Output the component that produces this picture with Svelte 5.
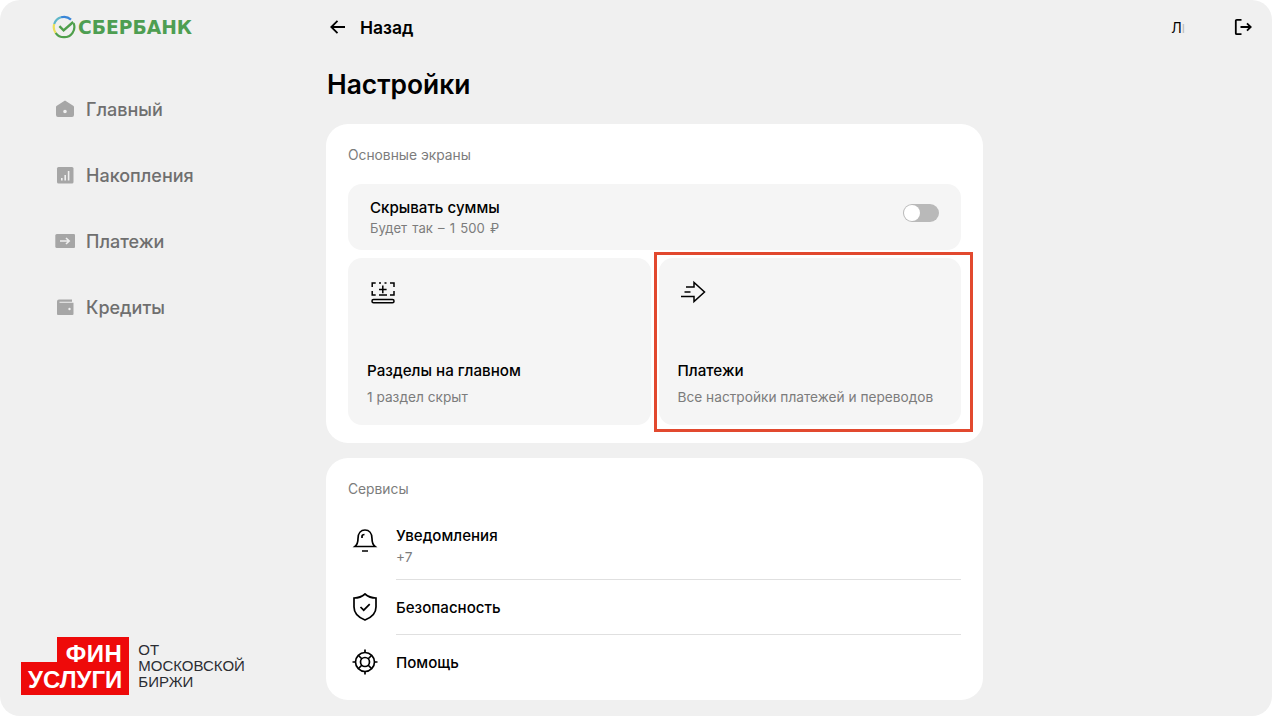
<script>
	const nav = [
		{ label: 'Главный', icon: 'home' },
		{ label: 'Накопления', icon: 'chart' },
		{ label: 'Платежи', icon: 'pay' },
		{ label: 'Кредиты', icon: 'wallet' }
	];
</script>

<div class="page">
	<aside class="sidebar">
		<div class="logo">
			<svg width="24" height="24" viewBox="0 0 24 24" fill="none">
				<path d="M21.6 8.2A10.2 10.2 0 0 1 12 22.2a10.2 10.2 0 0 1-8.4-4.4" stroke="#4f9f4b" stroke-width="2.2" />
				<path d="M3.6 17.8A10.2 10.2 0 0 1 2.2 9" stroke="#e9e05a" stroke-width="2.2" />
				<path d="M2.2 9A10.2 10.2 0 0 1 9 2.3" stroke="#5fb7c9" stroke-width="2.2" />
				<path d="M9 2.3A10.2 10.2 0 0 1 19 4.6" stroke="#3a86d8" stroke-width="2.2" />
				<path d="M7.4 11.2l4.2 4.2 9.6-8.4" stroke="#4f9f4b" stroke-width="2.4" />
			</svg>
			<span>СБЕРБАНК</span>
		</div>

		<nav>
			{#each nav as item}
				<div class="nav-item">
					<span class="nav-icon">
						{#if item.icon === 'home'}
							<svg width="20" height="20" viewBox="0 0 20 20">
								<path fill-rule="evenodd" d="M1 8a1.500 1.500 0 0 1 .8-1.300L10 1.500l8.200 5.200A1.500 1.500 0 0 1 19 8v8a2 2 0 0 1-2 2H3a2 2 0 0 1-2-2Zm9 2.700a1.800 1.800 0 1 0 0 3.600 1.800 1.800 0 0 0 0-3.600Z" fill="#a6a6a6" />
							</svg>
						{:else if item.icon === 'chart'}
							<svg width="20" height="20" viewBox="0 0 20 20">
								<rect x="2" y="2" width="16.500" height="16.500" rx="1.500" fill="#a6a6a6" />
								<rect x="6" y="13" width="1.600" height="2.500" fill="#f0f0f0" />
								<rect x="9.400" y="10" width="1.600" height="5.500" fill="#f0f0f0" />
								<rect x="12.800" y="6" width="1.600" height="9.500" fill="#f0f0f0" />
							</svg>
						{:else if item.icon === 'pay'}
							<svg width="20" height="20" viewBox="0 0 20 20">
								<rect x="0.300" y="3" width="20" height="14" rx="1.500" fill="#a6a6a6" />
								<path d="M5 10h9M11 7l3.200 3-3.200 3" fill="none" stroke="#f0f0f0" stroke-width="1.600" />
							</svg>
						{:else}
							<svg width="20" height="20" viewBox="0 0 20 20">
								<path d="M2 4.500A2 2 0 0 1 4 2.500h13v2.200H4.500v1.100H18.500V17a1 1 0 0 1-1 1H3a1 1 0 0 1-1-1Z" fill="#a6a6a6" />
								<circle cx="14.500" cy="12" r="1.200" fill="#f0f0f0" />
							</svg>
						{/if}
					</span>
					<span>{item.label}</span>
				</div>
			{/each}
		</nav>

		<div class="fin">
			<div class="fin-mark">
				<div class="fin-top">ФИН</div>
				<div class="fin-bottom">УСЛУГИ</div>
			</div>
			<div class="fin-text">ОТ<br />МОСКОВСКОЙ<br />БИРЖИ</div>
		</div>
	</aside>

	<main class="main">
		<div class="back">
			<svg width="20" height="20" viewBox="0 0 20 20" fill="none">
				<path d="M17 10H3.500M9.500 3.800 3.300 10l6.200 6.200" stroke="#000" stroke-width="1.800" />
			</svg>
			<span>Назад</span>
		</div>

		<h1>Настройки</h1>

		<section class="card first">
			<h2>Основные экраны</h2>

			<div class="hide-row">
				<div>
					<div class="row-title">Скрывать суммы</div>
					<div class="row-sub hide-sub">Будет так – 1 500 ₽</div>
				</div>
				<span class="toggle"><span class="knob"></span></span>
			</div>

			<div class="tiles">
				<div class="tile">
					<svg class="tile-icon" width="26" height="26" viewBox="0 0 26 26" fill="none" stroke="#000" stroke-width="1.500">
						<path d="M3.200 8V4h3.500M10 4h2M15.500 4h2M21 4h4v4M3.200 12v4h3.500M10 16h8M21 16h4v-4" />
						<path d="M13.800 6.500v7.800M10 10.400h7.600" />
						<rect x="3" y="20.500" width="22" height="3.200" rx="1.500" />
					</svg>
					<div class="tile-title">Разделы на главном</div>
					<div class="tile-sub">1 раздел скрыт</div>
				</div>
				<div class="tile">
					<svg class="tile-icon" width="26" height="26" viewBox="0 0 26 26" fill="none" stroke="#000" stroke-width="1.500">
						<path d="M6 8h8V3.500L24.500 13 14 22.500v-5H1" />
						<path d="M4.500 13h6" />
					</svg>
					<div class="tile-title">Платежи</div>
					<div class="tile-sub">Все настройки платежей и переводов</div>
					<div class="highlight"></div>
				</div>
			</div>
		</section>

		<section class="card second">
			<h2>Сервисы</h2>

			<div class="service tall">
				<svg class="bell" width="26" height="26" viewBox="0 0 26 26" fill="none" stroke="#000" stroke-width="1.700">
					<path d="M3 19.500c2.500-2 3-4.500 3-8C6 6 9 3 13 3s7 3 7 8.500c0 3.500.5 6 3 8Z" />
					<path d="M10 11V9.500c0-1 1-2 2.500-2M10 24h6" />
				</svg>
				<div class="service-body">
					<div class="row-title">Уведомления</div>
					<div class="row-sub">+7</div>
				</div>
			</div>
			<div class="service">
				<svg width="26" height="28" viewBox="0 0 26 28" fill="none" stroke="#000" stroke-width="1.700">
					<path d="M13 1c3 2.700 6.500 4 11 4v9c0 6-4.500 10.500-11 13C6.500 24.500 2 20 2 14V5c4.500 0 8-1.300 11-4Z" />
					<path d="M8.500 14l3.200 3.200 6-6" />
				</svg>
				<div class="service-body"><div class="row-title">Безопасность</div></div>
			</div>
			<div class="service">
				<svg width="26" height="26" viewBox="0 0 26 26" fill="none" stroke="#000" stroke-width="1.700">
					<circle cx="13" cy="13" r="9.500" />
					<circle cx="13" cy="13" r="4.500" />
					<path d="M6.500 6.500l3.500 3.500M19.500 6.500 16 10M6.500 19.500l3.500-3.500M19.500 19.500 16 16M13 .5v3M13 22.500v3M.5 13h3M22.500 13h3" />
				</svg>
				<div class="service-body"><div class="row-title">Помощь</div></div>
			</div>
		</section>
	</main>

	<div class="user">
		<span class="user-name">Л<span class="fade">I</span></span>
		<svg width="20" height="20" viewBox="0 0 20 20" fill="none" stroke="#000" stroke-width="1.800">
			<path d="M8.500 2.800H3.800a1 1 0 0 0-1 1v12.400a1 1 0 0 0 1 1h4.700" />
			<path d="M7.500 10h10M14 6.300 17.700 10 14 13.700" />
		</svg>
	</div>
</div>

<style>
	:global(body) {
		margin: 0;
		background: #fff;
	}

	.page {
		position: relative;
		display: flex;
		width: 1272px;
		height: 716px;
		overflow: hidden;
		background: #f0f0f0;
		border-radius: 20px;
		font-family: Inter, 'Noto Sans', sans-serif;
		color: #000;
	}

	.sidebar {
		display: flex;
		flex-direction: column;
		width: 326px;
		flex-shrink: 0;
		box-sizing: border-box;
		padding-top: 15px;
	}

	.logo {
		display: flex;
		align-items: center;
		gap: 2px;
		height: 24px;
		margin-left: 52px;
		font-family: 'DejaVu Sans', sans-serif;
		font-size: 18.700px;
		font-weight: 700;
		color: #4e9e52;
	}

	nav {
		display: flex;
		flex-direction: column;
		gap: 30px;
		margin-top: 52px;
		margin-left: 55px;
	}

	.nav-item {
		display: flex;
		align-items: center;
		gap: 11px;
		height: 36px;
		font-size: 18px;
		font-weight: 500;
		color: #6f6f6f;
	}

	.nav-icon {
		display: flex;
		width: 20px;
		height: 20px;
	}

	.fin {
		display: flex;
		align-items: center;
		gap: 9px;
		margin-top: auto;
		margin-bottom: 21px;
		margin-left: 21px;
	}

	.fin-mark {
		display: flex;
		flex-direction: column;
		align-items: flex-end;
		font-family: 'Liberation Sans', sans-serif;
		font-weight: 700;
		color: #fff;
		background: linear-gradient(#f0f0f0 0 25px, #ee0a0a 25px);
	}

	.fin-top {
		height: 29px;
		padding: 0 7px 0 9px;
		background: #ee0a0a;
		font-size: 24px;
		line-height: 33px;
		letter-spacing: 0.5px;
	}

	.fin-bottom {
		height: 29px;
		padding: 0 7px;
		font-size: 24px;
		line-height: 27px;
	}

	.fin-text {
		font-family: 'Liberation Sans', sans-serif;
		font-size: 15px;
		line-height: 16px;
		color: #2b2d33;
	}

	.main {
		width: 657px;
		padding-top: 17px;
	}

	.back {
		display: flex;
		align-items: center;
		gap: 12px;
		height: 20px;
		margin-left: 2px;
		font-size: 17.500px;
		font-weight: 600;
	}

	h1 {
		margin: 30px 0 23px 1px;
		font-size: 26.400px;
		line-height: 34px;
		font-weight: 600;
	}

	.card {
		box-sizing: border-box;
		background: #fff;
		border-radius: 22px;
		padding: 22px;
	}

	.first {
		height: 319px;
		margin-bottom: 15px;
	}

	.second {
		height: 242px;
	}

	h2 {
		margin: 0;
		font-size: 13.800px;
		line-height: 18px;
		font-weight: 400;
		color: #7c7c7c;
	}

	.hide-row {
		display: flex;
		align-items: center;
		justify-content: space-between;
		box-sizing: border-box;
		height: 66px;
		margin-top: 20px;
		padding: 0 22px;
		background: #f5f5f5;
		border-radius: 14px;
	}

	.row-title {
		font-size: 15.100px;
		line-height: 20px;
		font-weight: 500;
	}

	.row-sub {
		font-size: 13.700px;
		line-height: 18px;
		color: #7c7c7c;
	}

	.hide-sub {
		margin-top: 1px;
		font-size: 13.100px;
		word-spacing: 1.500px;
	}

	.toggle {
		position: relative;
		width: 36px;
		height: 18px;
		margin-bottom: 8px;
		border-radius: 9px;
		background: #b9b9b9;
	}

	.knob {
		position: absolute;
		left: 1px;
		top: 1px;
		box-sizing: border-box;
		width: 16px;
		height: 16px;
		border-radius: 50%;
		background: #fff;
	}

	.tiles {
		display: grid;
		grid-template-columns: 1fr 1fr;
		gap: 8px;
		margin-top: 8px;
	}

	.tile {
		position: relative;
		box-sizing: border-box;
		height: 167px;
		padding: 21px 19px 0;
		background: #f5f5f5;
		border-radius: 14px;
	}

	.tile-icon {
		display: block;
		margin-left: 2px;
	}

	.tile-title {
		margin-top: 56px;
		font-size: 15.200px;
		line-height: 20px;
		font-weight: 500;
	}

	.tile-sub {
		margin-top: 7px;
		font-size: 13.700px;
		line-height: 18px;
		color: #7c7c7c;
	}

	/* annotation frame drawn over the tile */
	.highlight {
		position: absolute;
		left: -5px;
		top: -6px;
		right: -12px;
		bottom: -7px;
		border: 3px solid #e2492f;
	}

	.service {
		display: flex;
		align-items: center;
		gap: 18px;
		height: 55px;
		margin-left: 4px;
	}

	.service.tall {
		height: 68px;
		margin-top: 13px;
	}

	.bell {
		margin-top: -10px;
	}

	.service-body {
		flex: 1;
		display: flex;
		flex-direction: column;
		justify-content: center;
		align-self: stretch;
		box-sizing: border-box;
		padding-top: 2px;
		gap: 2px;
	}

	.service + .service .service-body {
		border-top: 1px solid #e0e0e0;
	}

	.user {
		position: absolute;
		top: 17px;
		right: 19px;
		display: flex;
		align-items: center;
		gap: 48px;
		height: 20px;
		font-size: 14px;
	}

	.fade {
		color: #bbb;
		font-size: 12px;
	}
</style>
